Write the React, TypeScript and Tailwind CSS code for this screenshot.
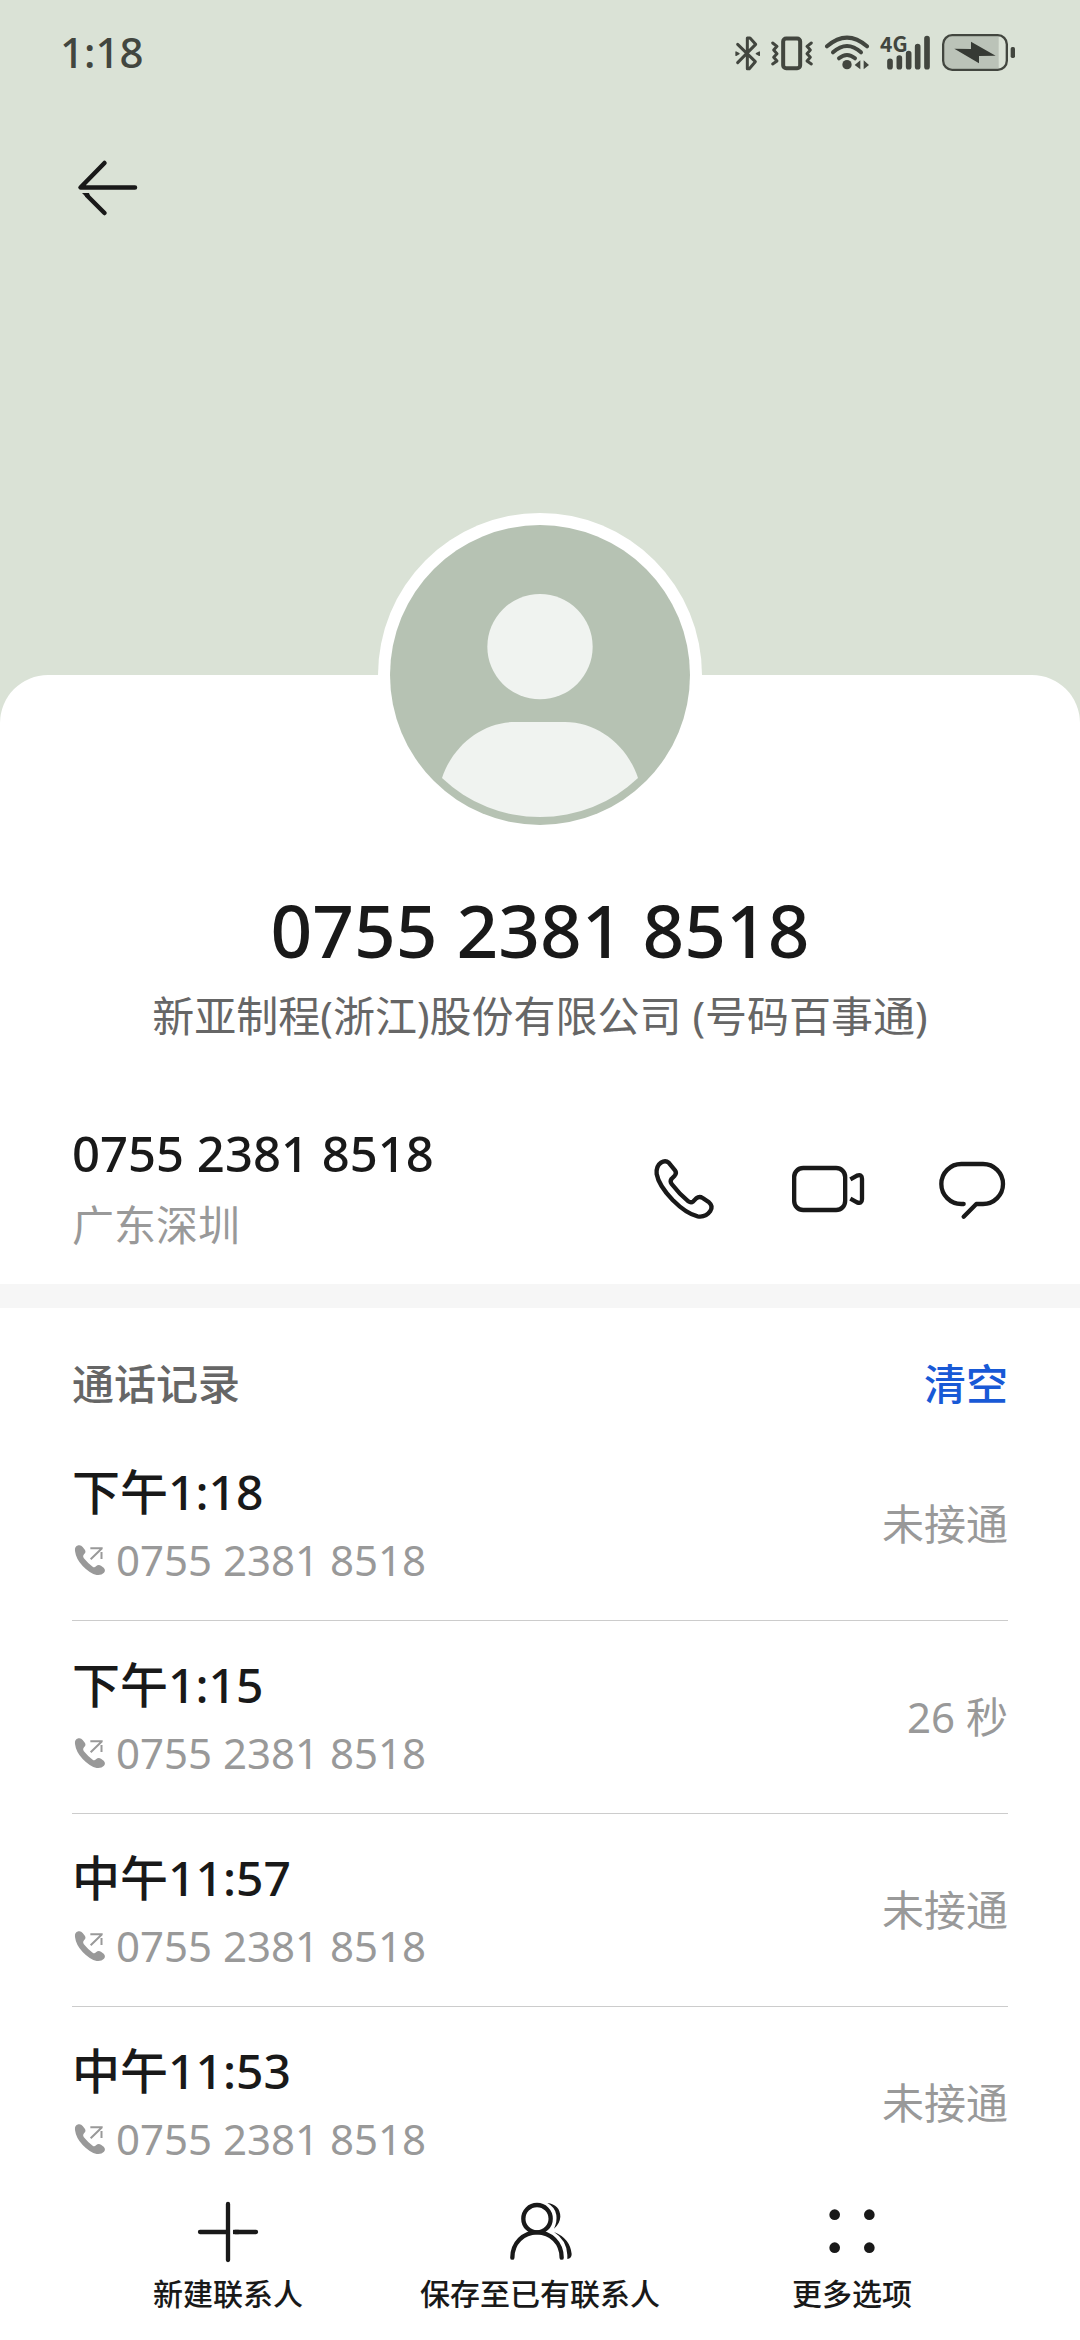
import type { ReactNode } from "react";

const PHONE = "0755 2381 8518";

const calls = [
  { time: "下午1:18", result: "未接通" },
  { time: "下午1:15", result: "26 秒" },
  { time: "中午11:57", result: "未接通" },
  { time: "中午11:53", result: "未接通" },
];

function StatusIcons() {
  return (
    <div className="flex items-center gap-[10px] text-[#42463f]">
      {/* Bluetooth */}
      <svg width="25" height="37" viewBox="45 39 75 111" fill="none" stroke="currentColor" strokeWidth="9" strokeLinecap="round" strokeLinejoin="round">
        <path d="M53 70 L106 122 L88 143 H82 V51 L90 51 L107 70 L53 125" />
        <path d="M48 93 L57 98 L48 103Z M118 93 L109 98 L118 103Z" fill="currentColor" strokeWidth="4" />
      </svg>
      {/* Vibrate */}
      <svg width="44" height="37" viewBox="147 39 132 111" fill="none" stroke="currentColor" strokeLinecap="round" strokeLinejoin="round">
        <rect x="186.5" y="52.5" width="51" height="89" rx="9" strokeWidth="12" />
        <path d="M155 66 L168 76 L158 87 L168 98 L158 109 L168 120 L155 129" strokeWidth="9" />
        <path d="M271 66 L258 76 L268 87 L258 98 L268 109 L258 120 L271 129" strokeWidth="9" />
      </svg>
      {/* Wi-Fi */}
      <svg width="46" height="37" viewBox="309 39 138 111" fill="none" stroke="currentColor" strokeWidth="12" strokeLinecap="round">
        <path d="M318 76 Q378 24 438 76" />
        <path d="M336 94 Q378 56 420 94" />
        <path d="M354 112 Q378 92 402 112" />
        <circle cx="378" cy="131" r="14" fill="currentColor" stroke="none" />
        <path d="M418 118 V145 L401 132Z M428 118 V145 L444 132Z" fill="currentColor" stroke="none" />
      </svg>
      {/* Mobile signal */}
      <svg width="51" height="37" viewBox="480 39 153 111" stroke="currentColor" strokeWidth="17" strokeLinecap="round" className="overflow-visible">
        <text x="480" y="94" fontSize="63" fontWeight="600" fill="currentColor" stroke="none" className="font-['Noto_Sans_CJK_SC',sans-serif]">4G</text>
        <path d="M510 121 V137 M538 111 V137 M566 98 V137 M593 77 V137 M621 53 V137" />
      </svg>
      {/* Battery */}
      <svg width="75" height="37" viewBox="663 39 225 111">
        <path d="M698 46 H836 V143 H698 Q673 143 673 119 V70 Q673 46 698 46Z" fill="#bbc3b8" />
        <rect x="669.5" y="42.5" width="191" height="104" rx="27" fill="none" stroke="currentColor" strokeWidth="7" />
        <rect x="872" y="78" width="13" height="33" rx="5" fill="currentColor" />
        <path d="M703 83 L753 84 V62 L827 104 L777 105 V127Z" fill="#363a34" />
      </svg>
    </div>
  );
}

function BackIcon() {
  return (
    <svg width="72" height="72" viewBox="0 0 72 72" fill="none" stroke="currentColor" strokeWidth="4.500" strokeLinecap="round" strokeLinejoin="round">
      <path d="M32.5 11 L8.5 35.5 H63" />
      <path d="M32.5 61 L15 43.500" />
      <path d="M10 41 H17 L18 44 L14 45Z" fill="currentColor" stroke="none" />
    </svg>
  );
}

function Avatar() {
  return (
    <svg width="300" height="300" viewBox="0 0 900 900" role="img" aria-label="头像">
      <circle cx="450" cy="450" r="450" fill="#b6c2b3" />
      <circle cx="450" cy="365" r="158" fill="#f0f3f0" />
      <path d="M156 759 C188 662 276 591 375 591 H525 C624 591 712 662 744 759 A427 427 0 0 1 156 759Z" fill="#f0f3f0" />
    </svg>
  );
}

function CallIcon() {
  return (
    <svg width="72" height="72" viewBox="84 99 216 216" fill="none" stroke="currentColor" strokeWidth="13" strokeLinejoin="round">
      <path d="M146 128 L165 151 Q171 159 164 167 L155 176 Q149 184 155 192 Q178 222 205 244 Q213 250 220 244 L229 235 Q238 228 248 234 L267 247 Q280 258 271 273 Q257 293 233 289 Q200 282 158 240 Q116 196 110 162 Q108 138 123 128 Q136 119 146 128Z" />
    </svg>
  );
}

function VideoIcon() {
  return (
    <svg width="72" height="72" viewBox="516 99 216 216" fill="none" stroke="currentColor" strokeWidth="13" strokeLinejoin="round" className="overflow-visible">
      <rect x="522.5" y="144" width="153" height="126" rx="27" />
      <path d="M691 178 L711 167 Q726 162 726 176 V238 Q726 252 711 247 L691 236" />
    </svg>
  );
}

function MessageIcon() {
  return (
    <svg width="72" height="72" viewBox="948 99 216 216" fill="none" stroke="currentColor" strokeWidth="13" strokeLinecap="round" strokeLinejoin="round">
      <path d="M1031 252 H1024 A60 60 0 0 1 1024 132 H1089 A60 60 0 0 1 1089 252 H1069 L1031 290" />
    </svg>
  );
}

function OutgoingIcon() {
  return (
    <svg width="36" height="36" viewBox="96 605 108 108" fill="none" stroke="currentColor" strokeWidth="6" aria-hidden="true">
      <path
        d="M105 632 Q103 618 115 615 Q123 613 128 620 L135 629 Q139 636 132 642 Q127 647 131 653 Q143 668 158 679 Q163 683 168 678 Q175 671 183 676 L191 682 Q198 689 192 697 Q184 706 170 704 Q150 700 128 677 Q108 656 105 632Z"
        fill="currentColor"
        stroke="none"
      />
      <path d="M152 657 L186 624 M151 623.500 H188 M184.500 635 V656" />
    </svg>
  );
}

function PlusIcon() {
  return (
    <svg width="72" height="72" viewBox="0 0 216 216" fill="none" stroke="currentColor" strokeWidth="13" strokeLinecap="round">
      <path d="M108 24 V192 M24 108 H108 M192 108 H129" />
      <path d="M123 108 H140" strokeLinecap="butt" />
    </svg>
  );
}

function PeopleIcon() {
  return (
    <svg width="72" height="72" viewBox="72 108 216 216" fill="none" stroke="currentColor" strokeWidth="13" strokeLinecap="round">
      <circle cx="171" cy="176" r="41" />
      <path d="M97 293 C97 249 130 217 171 217 S245 249 245 293" />
      <path d="M202 129 Q240 134 241 170 Q240 190 222 206 Q232 185 229 165 Q226 142 202 129Z M222 216 Q270 235 275 282 Q275 295 262 297 V285 Q260 240 222 216Z" fill="currentColor" stroke="none" />
    </svg>
  );
}

function MoreIcon() {
  return (
    <svg width="72" height="72" viewBox="1008 108 216 216" fill="currentColor">
      <circle cx="1064" cy="164" r="16" />
      <circle cx="1168" cy="164" r="16" />
      <circle cx="1064" cy="263" r="16" />
      <circle cx="1168" cy="263" r="16" />
    </svg>
  );
}

function TabButton({ icon, label }: { icon: ReactNode; label: string }) {
  return (
    <button type="button" className="flex flex-col items-center gap-1">
      {icon}
      <span className="text-[30px] leading-[44px] font-medium whitespace-nowrap">{label}</span>
    </button>
  );
}

export default function App() {
  return (
    <div className="min-h-screen flex flex-col bg-[#dae2d6] text-[#191919] font-['Noto_Sans','Noto_Sans_CJK_SC',sans-serif]">
      {/* Cover */}
      <header className="pb-[451px]">
        <div className="h-[104px] pl-[60px] pr-16 flex items-center justify-between">
          <span className="text-[42px] leading-[56px] font-medium text-[#42463f]">1:18</span>
          <StatusIcons />
        </div>
        <div className="pt-12 px-[72px]">
          <button type="button" aria-label="返回" className="block">
            <BackIcon />
          </button>
        </div>
      </header>

      <main className="grow flex flex-col bg-white rounded-t-[48px]">
        {/* Profile */}
        <section className="flex flex-col items-center px-[72px]">
          <div className="w-[324px] h-[324px] -mt-[162px] rounded-full bg-white flex items-center justify-center">
            <Avatar />
          </div>
          <h1 className="mt-[51px] text-[73px] leading-[84px] font-medium whitespace-nowrap">{PHONE}</h1>
          <p className="mt-4 text-[42px] leading-[56px] text-[#666666] whitespace-nowrap">新亚制程(浙江)股份有限公司 (号码百事通)</p>
        </section>

        {/* Number and actions */}
        <section className="mt-[81px] px-[72px] pb-[31px] flex items-center justify-between border-b-[24px] border-[#f6f6f6]">
          <div className="flex flex-col gap-4">
            <span className="text-[49px] leading-[56px] font-medium">{PHONE}</span>
            <span className="text-[42px] leading-[56px] text-[#999999]">广东深圳</span>
          </div>
          <div className="flex gap-[72px]">
            <button type="button" aria-label="拨打电话"><CallIcon /></button>
            <button type="button" aria-label="视频通话"><VideoIcon /></button>
            <button type="button" aria-label="发送信息"><MessageIcon /></button>
          </div>
        </section>

        {/* Call log */}
        <section className="pt-12 px-[72px]">
          <div className="mb-4 flex items-center justify-between text-[42px] leading-[56px] font-medium">
            <h2 className="text-[#666666]">通话记录</h2>
            <button type="button" className="text-[#1859d6]">清空</button>
          </div>
          <ul>
            {calls.map((call) => (
              <li key={call.time} className="pt-9 pb-9 last:pb-0 flex items-center justify-between border-b border-[#cccccc] last:border-b-0">
                <div>
                  <p className="text-[48px] leading-[56px] font-medium">{call.time}</p>
                  <p className="mt-4 flex items-center gap-2 text-[42px] leading-[48px] text-[#999999]">
                    <OutgoingIcon />
                    {PHONE}
                  </p>
                </div>
                <span className="text-[42px] leading-[56px] text-[#999999]">{call.result}</span>
              </li>
            ))}
          </ul>
        </section>

        <nav className="sticky bottom-0 mt-auto grid grid-cols-3 px-[72px] pb-6 bg-white">
          <TabButton icon={<PlusIcon />} label="新建联系人" />
          <TabButton icon={<PeopleIcon />} label="保存至已有联系人" />
          <TabButton icon={<MoreIcon />} label="更多选项" />
        </nav>
      </main>
    </div>
  );
}
